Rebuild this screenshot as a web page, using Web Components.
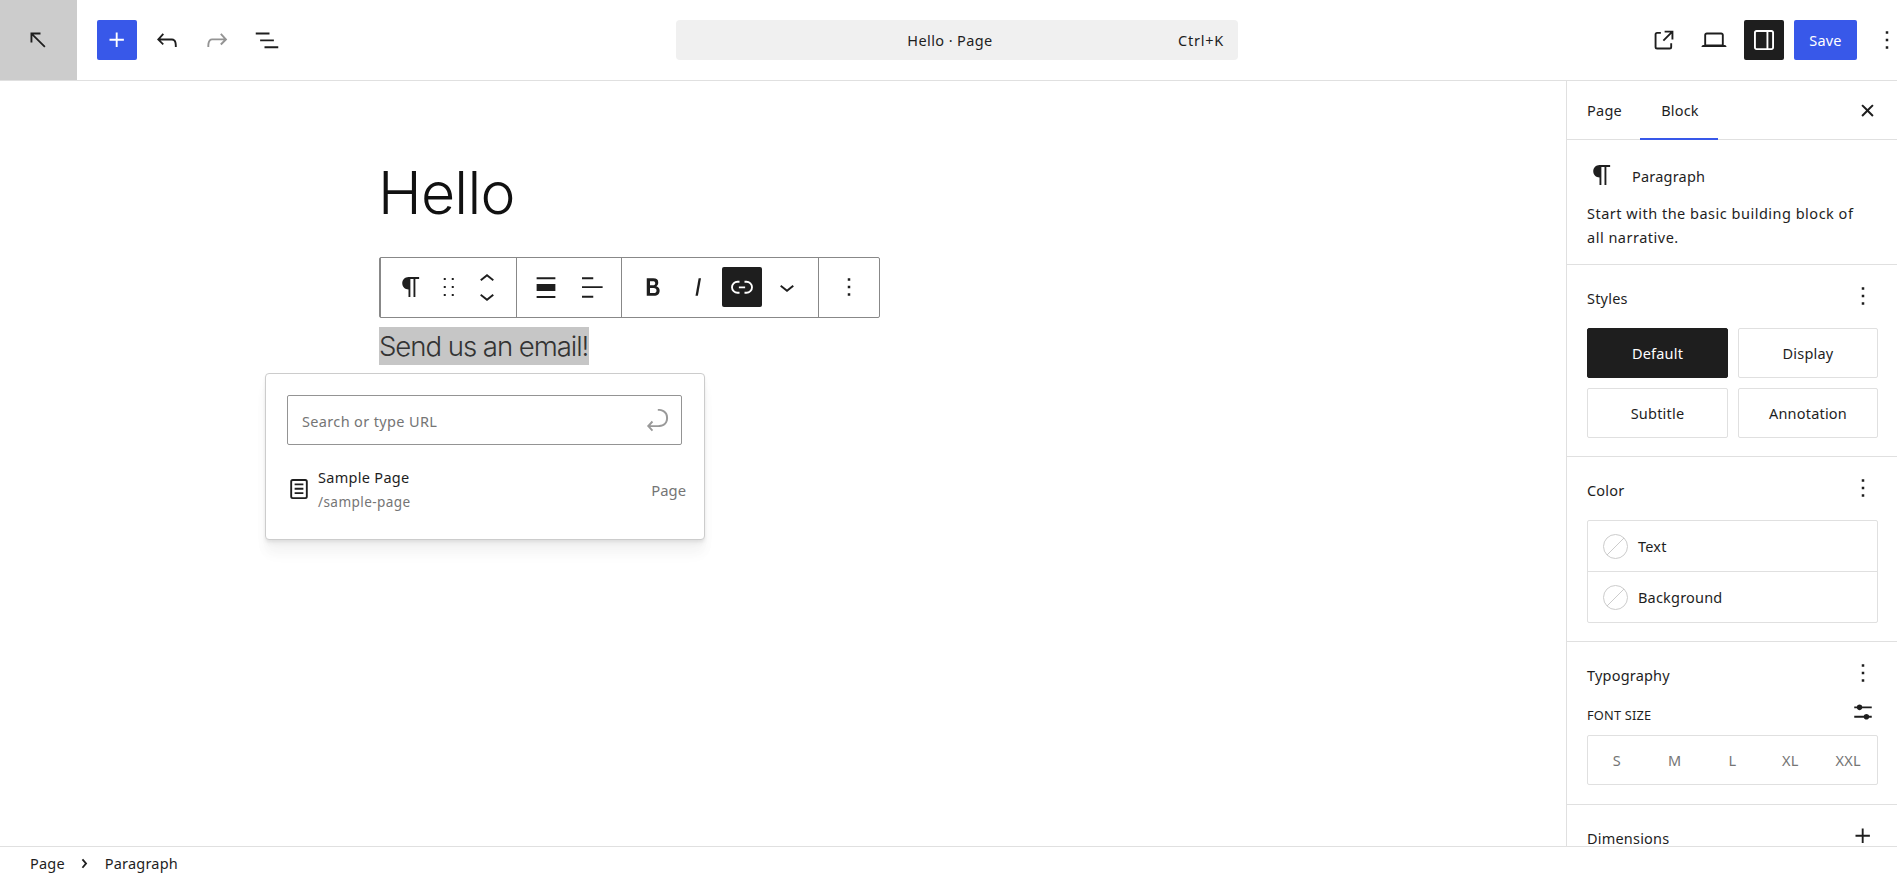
<!DOCTYPE html>
<html lang="en">
<head>
<meta charset="utf-8">
<title>Hello · Page</title>
<style>
html,body{margin:0;padding:0;height:100%;overflow:hidden;background:#fff}
body{font-family:"Noto Sans","Open Sans",sans-serif;font-size:14.5px;color:#1e1e1e}
</style>
</head>
<body>
<wp-app>
  <wp-header slot="header"></wp-header>
  <wp-canvas slot="canvas">
    <wp-block-toolbar slot="overlay"></wp-block-toolbar>
    <wp-link-popover slot="overlay"></wp-link-popover>
  </wp-canvas>
  <wp-sidebar slot="sidebar">
    <wp-tabs></wp-tabs>
    <wp-block-card></wp-block-card>
    <wp-panel heading="Styles" action="more">
      <wp-style-grid></wp-style-grid>
    </wp-panel>
    <wp-panel heading="Color" action="more">
      <wp-color-list></wp-color-list>
    </wp-panel>
    <wp-panel heading="Typography" action="more">
      <wp-font-size></wp-font-size>
    </wp-panel>
    <wp-panel heading="Dimensions" action="plus"></wp-panel>
  </wp-sidebar>
  <wp-footer slot="footer"></wp-footer>
</wp-app>
<script>
const ICONS={
plus:'M11 12.5V17.5H12.5V12.5H17.5V11H12.5V6H11V11H6V12.5H11Z',
undo:'M18.3 11.7c-.6-.6-1.4-.9-2.3-.9H6.7l2.9-3.3-1.1-1-4.5 5L8.5 16l1-1-2.7-2.7H16c.5 0 .9.2 1.3.5 1 1 1 3.4 1 4.5v.3h1.5v-.2c0-1.5 0-4.3-1.5-5.7z',
redo:'M15.6 6.5l-1.1 1 2.9 3.3H8c-.9 0-1.7.3-2.3.9-1.4 1.5-1.4 4.2-1.4 5.6v.2h1.5v-.3c0-1.1 0-3.5 1-4.5.3-.3.7-.5 1.3-.5h9.2L14.5 15l1.1 1.1 4.6-4.6-4.6-5z',
list:'M3 6h11v1.5H3V6Zm3.5 5.5h11V13h-11v-1.5ZM21 17H10v1.5h11V17Z',
arrow:'M14 6H6v8h1.5V8.5L17 18l1-1-9.5-9.5H14V6Z',
external:'M19.5 4.5h-7V6h4.44l-5.97 5.97 1.06 1.06L18 7.06v4.44h1.5v-7Zm-13 1a2 2 0 0 0-2 2v10a2 2 0 0 0 2 2h10a2 2 0 0 0 2-2v-3H17v3a.5.5 0 0 1-.5.5h-10a.5.5 0 0 1-.5-.5v-10a.5.5 0 0 1 .5-.5h3V5.5h-3Z',
laptop:'M20.5 16h-.7V8c0-1.1-.9-2-2-2H6.2c-1.1 0-2 .9-2 2v8h-.7c-.8 0-1.5.7-1.5 1.5h20c0-.8-.7-1.5-1.5-1.5zM5.7 8c0-.3.2-.5.5-.5h11.6c.3 0 .5.2.5.5v7.6H5.7V8z',
drawer:'M18 4H6c-1.1 0-2 .9-2 2v12c0 1.1.9 2 2 2h12c1.1 0 2-.9 2-2V6c0-1.1-.9-2-2-2zm-4 14.5H6c-.3 0-.5-.2-.5-.5V6c0-.3.2-.5.5-.5h8v13zm4.5-.5c0 .3-.2.5-.5.5h-2.5v-13H18c.3 0 .5.2.5.5v12z',
more:'M13 19h-2v-2h2v2zm0-6h-2v-2h2v2zm0-6h-2V5h2v2z',
close:'M5 6.6 6.6 5 12 10.4 17.4 5 19 6.6 13.6 12 19 17.4 17.4 19 12 13.6 6.6 19 5 17.4 10.4 12Z',
para:'m9.99609 14v-.2251l.00391.0001v6.225h1.5v-14.5h2.5v14.5h1.5v-14.5h3v-1.5h-8.50391c-2.76142 0-5 2.23858-5 5 0 2.7614 2.23858 5 5 5z',
drag:'M7.8 4.7h1.6v1.6H7.8zM14.2 4.7h1.6v1.6h-1.6zM7.8 11.1h1.6v1.6H7.8zM14.2 11.1h1.6v1.6h-1.6zM7.8 17.5h1.6v1.6H7.8zM14.2 17.5h1.6v1.6h-1.6z',
up:'M6.5 12.4L12 8l5.5 4.4-.9 1.2L12 10l-4.5 3.6-1-1.2z',
down:'M17.5 11.6L12 16l-5.5-4.4.9-1.2L12 14l4.5-3.6 1 1.2z',
wide:'M4.5 4.2h15v1.5h-15zM4.5 9.6h15v5.6h-15zM4.5 19.2h15v1.6h-15z',
left:'M4 4.2h9v1.6H4zM4 11.4h16.5v1.4H4zM4 19h9v1.6H4z',
bold:'M14.7 11.3c1-.6 1.5-1.6 1.5-3 0-2.3-1.3-3.4-4-3.4H7v14h5.8c1.4 0 2.5-.3 3.3-1 .8-.7 1.2-1.7 1.2-2.9.1-1.9-.8-3.1-2.6-3.7zm-5.1-4h2.3c.6 0 1.1.1 1.4.4.3.3.5.7.5 1.2s-.2 1-.5 1.2c-.3.3-.8.4-1.4.4H9.6V7.3zm4.6 9c-.4.3-1 .4-1.7.4H9.6v-3.9h2.9c.7 0 1.3.2 1.7.5.4.3.6.8.6 1.5s-.2 1.2-.6 1.5z',
italic:'M12.5 5L10 19h1.9l2.5-14z',
link:'M10 17.389H8.444A5.194 5.194 0 1 1 8.444 7H10v1.5H8.444a3.694 3.694 0 0 0 0 7.389H10v1.5ZM14 7h1.556a5.194 5.194 0 0 1 0 10.39H14v-1.5h1.556a3.694 3.694 0 0 0 0-7.39H14V7Zm-4.5 6h5v-1.5h-5V13Z',
enter:'m6.734 16.106 2.176-2.38-1.093-1.028-3.846 4.158 3.846 4.157 1.093-1.027-2.176-2.38h2.811c1.125 0 2.25.03 3.374 0 1.428-.001 3.362-.25 4.963-1.277 1.682-1.08 2.993-2.947 2.993-5.93 0-2.982-1.311-4.85-2.993-5.93-1.601-1.027-3.535-1.277-4.963-1.277h-.27v1.5h.27c1.208 0 2.85.224 4.152 1.06 1.223.785 2.208 2.138 2.208 4.647 0 2.509-.985 3.862-2.208 4.647-1.302.836-2.944 1.06-4.152 1.06h-6.185Z',
page:'M15.5 7.5h-7V9h7V7.5Zm-7 3.5h7v1.5h-7V11Zm7 3.5h-7V16h7v-1.5ZM17 4H7a2 2 0 0 0-2 2v12a2 2 0 0 0 2 2h10a2 2 0 0 0 2-2V6a2 2 0 0 0-2-2ZM7 5.5h10a.5.5 0 0 1 .5.5v12a.5.5 0 0 1-.5.5H7a.5.5 0 0 1-.5-.5V6a.5.5 0 0 1 .5-.5Z',
controls:'M19 7.5h-7.628c-.3089-.87389-1.1423-1.5-2.122-1.5-.97966 0-1.81309.62611-2.12197 1.5H5v1.5h2.12803c.30888.87389 1.14231 1.5 2.12197 1.5.97966 0 1.8131-.62611 2.122-1.5H19zM19 15h-2.128c-.3089-.8739-1.1423-1.5-2.122-1.5s-1.8131.6261-2.122 1.5H5v1.5h7.628c.3089.8739 1.1423 1.5 2.122 1.5s1.8131-.6261 2.122-1.5H19z',
crumb:'M10.8622 8.04053L14.2805 12.0286L10.8622 16.0167L9.72327 15.0405L12.3049 12.0286L9.72327 9.01672L10.8622 8.04053Z'
};
function def(name,css,html){
  const t=document.createElement('template');
  t.innerHTML=`<style>${css}</style>${html}`;
  customElements.define(name,class extends HTMLElement{
    constructor(){super();this.attachShadow({mode:'open'}).appendChild(t.content.cloneNode(true));}
  });
}
customElements.define('wp-icon',class extends HTMLElement{
  constructor(){super();this.attachShadow({mode:'open'});}
  connectedCallback(){
    const s=this.getAttribute('size')||30;
    this.shadowRoot.innerHTML=`<style>:host{display:block;flex:none;width:${s}px;height:${s}px;color:inherit}svg{display:block;width:100%;height:100%;fill:currentColor}</style><svg viewBox="0 0 24 24" aria-hidden="true"><path fill-rule="evenodd" d="${ICONS[this.getAttribute('name')]}"/></svg>`;
  }
});
def('wp-app',`
:host{display:grid;width:1897px;height:873px;grid-template-columns:1fr 331px;grid-template-rows:81px 1fr 27px;overflow:hidden}
::slotted(*){min-height:0}
`,`<slot name="header"></slot><slot name="canvas"></slot><slot name="sidebar"></slot><slot name="footer"></slot>`);
def('wp-header',`
:host{grid-column:1/3;display:flex;align-items:center;border-bottom:1px solid #e0e0e0;overflow:hidden;height:80px}
.logo{width:77px;height:80px;background:#ccc;display:flex;align-items:center;justify-content:center;flex:none}
.logo wp-icon{margin-left:-2px}
.tools{display:flex;gap:10px;align-items:center;margin-left:20px;width:190px;flex:none}
.btn{width:40px;height:40px;display:flex;align-items:center;justify-content:center;flex:none;border-radius:2px}
.primary{background:#3858e9;color:#fff}
.dark{background:#1e1e1e;color:#fff}
.muted{color:#949494}
.cmd{display:grid;align-items:center;width:562px;height:40px;margin-left:389px;background:#f0f0f0;border-radius:4px;flex:none;letter-spacing:.4px}
.cmd span{grid-area:1/1}
.title{justify-self:center;margin-right:14px}
.key{justify-self:end;margin-right:14px;letter-spacing:.75px}
.right{display:flex;gap:10px;align-items:center;margin-left:auto;margin-right:-5px}
.save{background:#3858e9;color:#fff;width:63px;height:40px;border-radius:2px;display:flex;align-items:center;justify-content:center;letter-spacing:.2px}
.kebab{margin-left:5px}
`,`
<div class="logo"><wp-icon name="arrow"></wp-icon></div>
<div class="tools">
  <div class="btn primary"><wp-icon name="plus"></wp-icon></div>
  <div class="btn"><wp-icon name="undo"></wp-icon></div>
  <div class="btn muted"><wp-icon name="redo"></wp-icon></div>
  <div class="btn"><wp-icon name="list"></wp-icon></div>
</div>
<div class="cmd"><span class="title">Hello · Page</span><span class="key">Ctrl+K</span></div>
<div class="right">
  <div class="btn"><wp-icon name="external"></wp-icon></div>
  <div class="btn"><wp-icon name="laptop"></wp-icon></div>
  <div class="btn dark"><wp-icon name="drawer"></wp-icon></div>
  <div class="save">Save</div>
  <wp-icon class="kebab" name="more"></wp-icon>
</div>`);
def('wp-canvas',`
:host{display:block;position:relative;padding:77px 0 0 379px;overflow:visible;font-family:Inter,sans-serif;font-weight:300;color:#111}
h1{margin:0;font-size:59px;line-height:70px;font-weight:300;letter-spacing:-.75px;color:#111;margin-left:-1px}
p{margin:99px 0 0;font-size:27.6px;line-height:38px;letter-spacing:-1.06px;color:#333}
.sel{display:inline-block;background:#c6c6c6;padding:0 1px 0 0}
`,`<h1>Hello</h1><p><span class="sel">Send us an email!</span></p><slot name="overlay"></slot>`);
def('wp-block-toolbar',`
:host{position:absolute;left:379px;top:176px;display:flex;height:58.5px;border:1.5px solid #888;border-radius:2px;background:#fff;color:#1e1e1e;font-weight:400;box-sizing:content-box}
.g{display:flex;align-items:center;border-left:1.5px solid #888}
.g:first-child{border-left:0}
.g1{padding:0 14.25px 0 14.5px;gap:8px}
.g2{padding:0 14px 0 14.5px;gap:16px}
.g3{padding:0 15.5px 0 16px;gap:15px}
.g4{padding:0 15.5px 0 15px}
.mover{display:flex;flex-direction:column;width:30px;height:42px;justify-content:center}
.mover wp-icon:first-child{margin-bottom:-12.5px}
.active{width:40px;height:40px;background:#1e1e1e;color:#fff;border-radius:2px;display:flex;align-items:center;justify-content:center;margin:0 -4.5px 0 -6.5px}
`,`
<div class="g g1"><wp-icon name="para"></wp-icon><wp-icon name="drag"></wp-icon><div class="mover"><wp-icon name="up"></wp-icon><wp-icon name="down"></wp-icon></div></div>
<div class="g g2"><wp-icon name="wide"></wp-icon><wp-icon name="left"></wp-icon></div>
<div class="g g3"><wp-icon name="bold"></wp-icon><wp-icon name="italic"></wp-icon><div class="active"><wp-icon name="link"></wp-icon></div><wp-icon name="down"></wp-icon></div>
<div class="g g4"><wp-icon name="more"></wp-icon></div>`);
def('wp-link-popover',`
:host{position:absolute;left:265px;top:292px;width:440px;box-sizing:border-box;height:167px;background:#fff;border:1px solid #ccc;border-radius:4px;box-shadow:0 2px 3px rgba(0,0,0,.05),0 4px 5px rgba(0,0,0,.04),0 12px 12px rgba(0,0,0,.03),0 16px 16px rgba(0,0,0,.02);padding:21px 21px 0;font-family:"Noto Sans","Open Sans",sans-serif;font-weight:400;color:#1e1e1e}
.field{height:50px;box-sizing:border-box;border:1px solid #949494;border-radius:2px;display:flex;align-items:center;justify-content:space-between;padding:0 9px 0 14px;color:#757575;width:395px;letter-spacing:.35px}
.field span{margin-top:2px}
.field wp-icon{color:#999}
.row{display:flex;align-items:center;margin-top:18px;margin-left:-3px;margin-right:-5px}
.t{flex:1;margin-left:4px;margin-top:2px}
.name{letter-spacing:.3px;line-height:25px}
.url{font-size:13.6px;color:#757575;letter-spacing:.4px;line-height:24px}
.kind{color:#757575;font-size:14.8px;margin-top:2px;margin-right:2px}
`,`
<div class="field"><span>Search or type URL</span><wp-icon name="enter"></wp-icon></div>
<div class="row"><wp-icon name="page"></wp-icon><div class="t"><div class="name">Sample Page</div><div class="url">/sample-page</div></div><span class="kind">Page</span></div>`);
def('wp-sidebar',`
:host{display:block;border-left:1px solid #e0e0e0;overflow:hidden;background:#fff;letter-spacing:.2px}
`,`<slot></slot>`);
def('wp-tabs',`
:host{display:flex;align-items:center;height:58px;border-bottom:1px solid #e0e0e0}
.t{height:59px;display:flex;align-items:center;justify-content:center;box-sizing:border-box}
.a{width:73px;padding-left:2px}
.b{width:78px;border-bottom:2px solid #3858e9;margin-bottom:-1px;padding-left:2px}
wp-icon{margin-left:auto;margin-right:19px}
`,`<div class="t a">Page</div><div class="t b">Block</div><wp-icon name="close" size="21"></wp-icon>`);
def('wp-block-card',`
:host{display:block;padding:20px 20px 15px;border-bottom:1px solid #e0e0e0}
.r{display:flex;align-items:center;gap:15px;height:30px}
.r span{margin-top:2px}
p{margin:10.5px 0 0;line-height:24.25px;letter-spacing:.5px;max-width:275px}
`,`<div class="r"><wp-icon name="para"></wp-icon><span>Paragraph</span></div><p>Start with the basic building block of all narrative.</p>`);
customElements.define('wp-panel',class extends HTMLElement{
  constructor(){super();this.attachShadow({mode:'open'});}
  connectedCallback(){
    this.shadowRoot.innerHTML=`<style>
:host{display:block;padding:18px 19px 18px 20px;border-bottom:1px solid #e0e0e0}
.h{display:flex;justify-content:space-between;align-items:center;height:30px;margin-bottom:15px}
.h span{line-height:18px}
wp-icon{margin-top:-4px}
</style><div class="h"><span>${this.getAttribute('heading')}</span><wp-icon name="${this.getAttribute('action')}"></wp-icon></div><slot></slot>`;
  }
});
def('wp-style-grid',`
:host{display:grid;grid-template-columns:141px 140px;grid-auto-rows:50px;gap:10px}
div{display:flex;align-items:center;justify-content:center;border:1px solid #e0e0e0;border-radius:2px;box-sizing:border-box}
.on{background:#1e1e1e;color:#fff;border-color:#1e1e1e}
`,`<div class="on">Default</div><div>Display</div><div>Subtitle</div><div>Annotation</div>`);
def('wp-color-list',`
:host{display:block;border:1px solid #e0e0e0;border-radius:2px}
.r{display:flex;align-items:center;height:50px;gap:10px;padding-left:15px}
.r+.r{border-top:1px solid #e0e0e0}
.c{width:25px;height:25px;box-sizing:border-box;border:1px solid #ccc;border-radius:50%;background:linear-gradient(-45deg,transparent 48%,#ccc 48%,#ccc 52%,transparent 52%);flex:none}
`,`<div class="r"><span class="c"></span><span>Text</span></div><div class="r"><span class="c"></span><span>Background</span></div>`);
def('wp-font-size',`
:host{display:block;margin-top:-1px;padding-bottom:1px}
.l{display:flex;justify-content:space-between;align-items:center;height:22px;margin-bottom:9px;font-size:12.8px}
.l wp-icon{margin-top:-6px}
.s{display:flex;height:50px;box-sizing:border-box;border:1px solid #e0e0e0;border-radius:2px;color:#757575}
.s span{flex:1;display:flex;align-items:center;justify-content:center}
`,`<div class="l"><span>FONT SIZE</span><wp-icon name="controls"></wp-icon></div><div class="s"><span>S</span><span>M</span><span>L</span><span>XL</span><span>XXL</span></div>`);
def('wp-footer',`
:host{grid-column:1/3;display:flex;align-items:center;border-top:1px solid #e0e0e0;background:#fff;padding:6px 0 0 30px;height:27px;box-sizing:border-box;letter-spacing:.2px}
wp-icon{margin:0 6px 0 5px}
`,`<span>Page</span><wp-icon name="crumb" size="29"></wp-icon><span>Paragraph</span>`);
</script>
</body>
</html>
